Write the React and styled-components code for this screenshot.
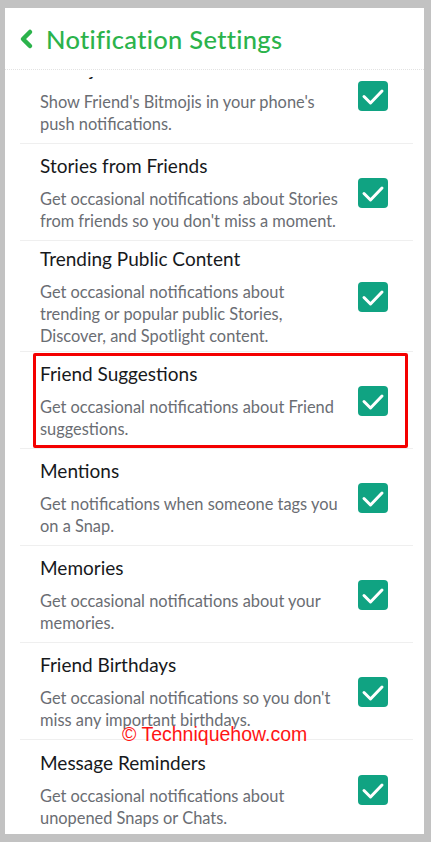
import React from 'react';
import styled, { createGlobalStyle } from 'styled-components';

const GlobalStyle = createGlobalStyle`
  html, body {
    margin: 0;
    padding: 0;
    background: #c2c2c2;
  }
  body {
    font-family: Lato, "Open Sans", sans-serif;
  }
`;

const Screen = styled.div`
  width: 431px;
  height: 842px;
  box-sizing: border-box;
  padding: 8px 7px 8px 5px;
`;

const Panel = styled.div`
  position: relative;
  display: flex;
  flex-direction: column;
  height: 100%;
  background: #fff;
  overflow: hidden;
`;

const Header = styled.div`
  display: flex;
  align-items: center;
  gap: 9px;
  height: 61px;
  padding-left: 10px;
  border-bottom: 1px dotted #e2e2e2;
  flex-shrink: 0;
`;

const Title = styled.h1`
  margin: 0;
  font-family: Lato, sans-serif;
  font-size: 25.5px;
  font-weight: 500;
  color: #2bb34b;
  letter-spacing: 0.3px;
`;

const Viewport = styled.div`
  flex: 1;
  margin-top: 7px;
  overflow: hidden;
`;

const List = styled.div`
  margin: -30px 11px 0 15px;
`;

const Row = styled.div`
  position: relative;
  display: flex;
  align-items: center;
  box-sizing: border-box;
  min-height: 97px;
  padding: 6px 25px 4px 20px;
  border-bottom: ${p => (p.$last ? 'none' : '1px solid #efefef')};
`;

const Highlight = styled.div`
  position: absolute;
  top: 1px;
  bottom: 0;
  left: 13px;
  right: 5px;
  border: 3px solid #f40000;
  border-radius: 2px;
  pointer-events: none;
`;

const Text = styled.div`
  flex: 1;
  min-width: 0;
`;

const RowTitle = styled.div`
  font-size: 19px;
  line-height: 24px;
  color: #17191c;
  margin-bottom: 10px;
  white-space: nowrap;
`;

const RowDesc = styled.div`
  font-size: 16.4px;
  line-height: 22px;
  color: #6a6d73;
  white-space: nowrap;
`;

const Box = styled.div`
  width: 30px;
  height: 30px;
  flex-shrink: 0;
  border-radius: 4px;
  background: #10a382;
  display: flex;
  align-items: center;
  justify-content: center;
`;

const Watermark = styled.div`
  position: absolute;
  top: 717px;
  left: 117px;
  font-family: "Liberation Sans", Arial, sans-serif;
  font-size: 19.5px;
  line-height: 19px;
  color: #ff1414;
  pointer-events: none;
`;

const Back = () => (
  <svg width="22" height="30" viewBox="0 0 22 30">
    <polyline points="15,5 8,12 15,19" transform="translate(0,3)" fill="none"
      stroke="#2bb34b" strokeWidth="4.5" strokeLinecap="round" strokeLinejoin="round" />
  </svg>
);

const Check = () => (
  <Box>
    <svg width="30" height="30" viewBox="0 0 30 30">
      <polyline points="6,15.5 12.5,22 24,10" fill="none" stroke="#fff"
        strokeWidth="3" strokeLinecap="round" strokeLinejoin="round" />
    </svg>
  </Box>
);

const settings = [
  { title: 'Bitmojis in Notifications', desc: ["Show Friend's Bitmojis in your phone's", 'push notifications.'] },
  { title: 'Stories from Friends', desc: ['Get occasional notifications about Stories', "from friends so you don't miss a moment."] },
  { title: 'Trending Public Content', desc: ['Get occasional notifications about', 'trending or popular public Stories,', 'Discover, and Spotlight content.'] },
  { title: 'Friend Suggestions', desc: ['Get occasional notifications about Friend', 'suggestions.'], marked: true },
  { title: 'Mentions', desc: ['Get notifications when someone tags you', 'on a Snap.'] },
  { title: 'Memories', desc: ['Get occasional notifications about your', 'memories.'] },
  { title: 'Friend Birthdays', desc: ["Get occasional notifications so you don't", 'miss any important birthdays.'] },
  { title: 'Message Reminders', desc: ['Get occasional notifications about', 'unopened Snaps or Chats.'] },
];

export default function App() {
  return (
    <Screen>
      <GlobalStyle />
      <Panel>
        <Header>
          <Back />
          <Title>Notification Settings</Title>
        </Header>
        <Viewport>
          <List>
            {settings.map((s, i) => (
              <Row key={s.title} $last={i === settings.length - 1}>
                {s.marked && <Highlight />}
                <Text>
                  <RowTitle>{s.title}</RowTitle>
                  <RowDesc>
                    {s.desc.map((line, j) => (
                      <React.Fragment key={j}>
                        {j > 0 && <br />}
                        {line}
                      </React.Fragment>
                    ))}
                  </RowDesc>
                </Text>
                <Check />
              </Row>
            ))}
          </List>
        </Viewport>
        <Watermark>© Techniquehow.com</Watermark>
      </Panel>
    </Screen>
  );
}
